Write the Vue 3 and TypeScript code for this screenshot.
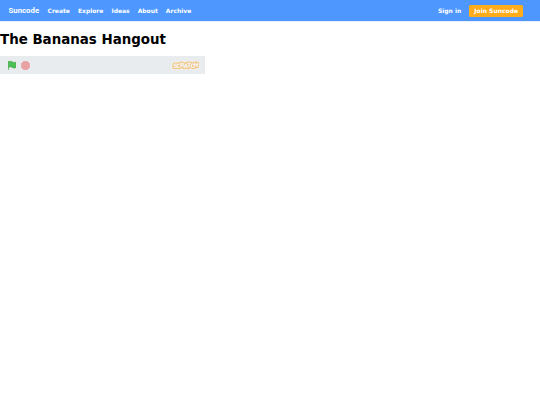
<template>
  <div class="page">
    <nav class="navbar">
      <a class="brand">Suncode</a>
      <a v-for="link in links" :key="link" class="link">{{ link }}</a>
      <div class="spacer" />
      <a class="link">Sign in</a>
      <a class="join">Join Suncode</a>
    </nav>
    <h1>The Bananas Hangout</h1>
    <div class="player">
      <svg class="flag" viewBox="0 0 16.63 17.5">
        <path
          d="M.75 2A6.44 6.44 0 0 1 8.44 2a6.44 6.44 0 0 0 7.44 0v10.4a6.44 6.44 0 0 1-7.44 0 6.44 6.44 0 0 0-7.69 0"
          fill="#4cbf56"
          stroke="#45a845"
          stroke-width="1.5"
          stroke-linejoin="round"
        />
        <path d="M.75 16.75V.75" stroke="#45a845" stroke-width="1.5" stroke-linecap="round" />
      </svg>
      <svg class="stop" viewBox="0 0 14 14">
        <path
          d="M4.3.5h5.4L13.5 4.3v5.4L9.7 13.5H4.3L.5 9.7V4.3z"
          fill="#ec5959"
          stroke="#e25959"
          stroke-width="1"
          stroke-linejoin="round"
        />
      </svg>
      <div class="spacer" />
      <svg class="logo" viewBox="0 0 32 14">
        <text class="halo" :x="xs" :y="ys">SCRATCH</text>
        <text class="outline" :x="xs" :y="ys">SCRATCH</text>
        <text class="letters" :x="xs" :y="ys">SCRATCH</text>
      </svg>
    </div>
  </div>
</template>

<script setup lang="ts">
const links: string[] = ["Create", "Explore", "Ideas", "About", "Archive"];

// the logo letters sit on an uneven baseline
const xs = "6.4 9.8 13.2 17.2 20.3 23.6 27";
const ys = "9.5 9.7 9.2 9.5 8.9 9.7 9.2";
</script>

<style>
body {
  background-color: #fff;
}
</style>

<style scoped>
.page {
  font-family: "DejaVu Sans", Verdana, sans-serif;
}
.navbar {
  height: 21px;
  padding: 0 17px 0 8.5px;
  box-sizing: border-box;
  display: flex;
  align-items: center;
  background-color: #4d97ff;
  box-shadow: 0 1px 0 #e4efff;
  color: #fff;
  font-size: 6px;
  font-weight: bold;
  white-space: nowrap;
}
.brand {
  font-family: Roboto, Arial, sans-serif;
  font-size: 7.8px;
  margin-right: 8.4px;
}
.link {
  margin-right: 8px;
}
.spacer {
  flex: 1;
}
.join {
  height: 12px;
  line-height: 12px;
  padding: 0 5px;
  border-radius: 1.5px;
  background-color: #ffab1a;
}
h1 {
  margin: 10px 0 7px;
  font-size: 13.4px;
  line-height: 18px;
  color: #000;
}
.player {
  width: 204.5px;
  height: 18px;
  padding: 0 3.5px 0 7.5px;
  box-sizing: border-box;
  display: flex;
  align-items: center;
  background-color: #e9ecef;
}
.flag {
  width: 8.6px;
  height: 9px;
  margin-right: 4.9px;
  fill: none;
}
.stop {
  width: 9px;
  height: 9px;
  opacity: 0.5;
}
.logo {
  width: 32px;
  height: 14px;
  overflow: visible;
  opacity: 0.5;
}
.logo text {
  font-family: "DejaVu Sans", sans-serif;
  font-size: 6px;
  font-weight: bold;
  text-anchor: middle;
  stroke-linejoin: round;
}
.halo {
  fill: #fff;
  stroke: #fff;
  stroke-width: 4px;
}
.outline {
  fill: #faa51d;
  stroke: #faa51d;
  stroke-width: 2.4px;
}
.letters {
  fill: #fff;
}
</style>
